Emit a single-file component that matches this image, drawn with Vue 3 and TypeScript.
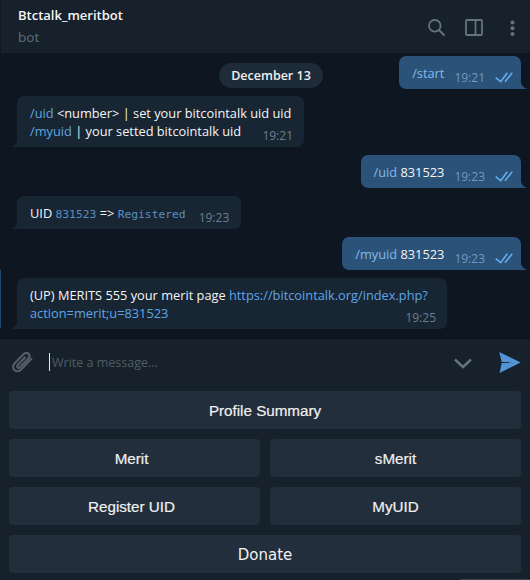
<script setup lang="ts">
type Part = { text: string; kind?: 'cmd' | 'code' | 'link' }
type Msg = { id: number; out: boolean; lines: Part[][]; time: string; gap: number; width?: number }

const messages: Msg[] = [
  { id: 1, out: true, lines: [[{ text: '/start', kind: 'cmd' }]], time: '19:21', gap: 7 },
  {
    id: 2,
    out: false,
    lines: [
      [{ text: '/uid', kind: 'cmd' }, { text: ' <number> | set your bitcointalk uid uid' }],
      [{ text: '/myuid', kind: 'cmd' }, { text: ' | your setted bitcointalk uid' }],
    ],
    time: '19:21',
    gap: 8,
    width: 287,
  },
  { id: 3, out: true, lines: [[{ text: '/uid', kind: 'cmd' }, { text: ' 831523' }]], time: '19:23', gap: 8 },
  {
    id: 4,
    out: false,
    lines: [[{ text: 'UID ' }, { text: '831523', kind: 'code' }, { text: ' => ' }, { text: 'Registered', kind: 'code' }]],
    time: '19:23',
    gap: 8,
  },
  { id: 5, out: true, lines: [[{ text: '/myuid', kind: 'cmd' }, { text: ' 831523' }]], time: '19:23', gap: 8 },
  {
    id: 6,
    out: false,
    lines: [
      [{ text: '(UP) MERITS 555 your merit page ' }, { text: 'https://bitcointalk.org/index.php?', kind: 'link' }],
      [{ text: 'action=merit;u=831523', kind: 'link' }],
    ],
    time: '19:25',
    gap: 8,
    width: 430,
  },
]

const keyboard = [['Profile Summary'], ['Merit', 'sMerit'], ['Register UID', 'MyUID'], ['Donate']]
</script>

<template>
  <div class="app">
    <header class="topbar">
      <div class="peer">
        <div class="peer-name">Btctalk_meritbot</div>
        <div class="peer-status">bot</div>
      </div>
      <div class="actions">
        <svg class="ic-search" width="17" height="17" viewBox="0 0 17 17" fill="none" stroke="#66737f" stroke-width="1.800">
          <circle cx="6.800" cy="6.800" r="5.800" />
          <path d="M11 11l5 5" stroke-linecap="round" />
        </svg>
        <svg class="ic-panel" width="18" height="17" viewBox="0 0 18 17" fill="none" stroke="#66737f" stroke-width="1.800">
          <rect x="1" y="1" width="16" height="15" rx="1" />
          <path d="M10.500 1v15" />
        </svg>
        <svg class="ic-more" width="5" height="16" viewBox="0 0 5 16" fill="#66737f">
          <circle cx="2.500" cy="2.500" r="2" />
          <circle cx="2.500" cy="8.200" r="2" />
          <circle cx="2.500" cy="14" r="2" />
        </svg>
      </div>
    </header>

    <main class="history">
      <div class="edge"></div>
      <div class="date-pill">December 13</div>
      <div
        v-for="m in messages"
        :key="m.id"
        class="row"
        :class="{ out: m.out }"
        :style="{ marginBottom: m.gap + 'px' }"
      >
        <div
          class="bubble"
          :class="{ multi: m.lines.length > 1 }"
          :style="m.width ? { width: m.width + 'px' } : undefined"
        >
          <div class="body">
            <div v-for="(line, i) in m.lines" :key="i" class="line">
              <template v-for="(p, j) in line" :key="j">
                <span :class="p.kind">{{ p.text }}</span>
              </template>
            </div>
          </div>
          <span class="meta">
            <span class="time">{{ m.time }}</span>
            <svg v-if="m.out" class="checks" width="18" height="11" viewBox="0 0 18 11" fill="none" stroke="#66aeee" stroke-width="1.600">
              <path d="M.7 5.700l5 4L12.300.7" />
              <path d="M10 9.700L17.300.7" />
            </svg>
          </span>
          <svg class="tail" width="7" height="10" viewBox="0 0 7 10">
            <path v-if="m.out" d="M0 0c.5 5 3 8.500 7 10H0z" fill="#2b5278" />
            <path v-else d="M7 0C6.500 5 4 8.500 0 10h7z" fill="#182533" />
          </svg>
        </div>
      </div>
    </main>

    <div class="composer">
      <svg class="clip" width="25" height="25" viewBox="0 0 24 24" fill="none" stroke="#525d69" stroke-width="2.100" stroke-linecap="round">
        <path d="M20.500 8.500l-9.800 10.300c-2 2-4.800 2-6.500.4s-1.700-4.400.3-6.400l8.700-9c1.400-1.400 3.400-1.400 4.600-.2s1.200 3.100-.2 4.500l-8 8.400c-.7.700-1.700.7-2.300.2s-.6-1.500.1-2.200l7-7.300" />
      </svg>
      <div class="field"><span class="caret"></span><span class="placeholder">Write a message...</span></div>
      <svg class="chev" width="18" height="11" viewBox="0 0 18 11" fill="none" stroke="#66737f" stroke-width="2.400">
        <path d="M1 1.500L9 9l8-7.500" />
      </svg>
      <svg class="send" width="22" height="21" viewBox="0 0 22 21">
        <path d="M.3 0l21.400 10.500L.6 21l2.100-9.900L14 10.500 2.700 9.900z" fill="#5294d6" />
      </svg>
    </div>

    <section class="keyboard">
      <div v-for="(row, i) in keyboard" :key="i" class="kb-row">
        <button v-for="label in row" :key="label" class="kb-btn" :class="{ donate: label === 'Donate' }">{{ label }}</button>
      </div>
    </section>
    <div class="corner"></div>
  </div>
</template>

<style scoped>
.app {
  position: relative;
  width: 530px;
  height: 580px;
  overflow: hidden;
  display: flex;
  flex-direction: column;
  background: #17212b;
  font-family: "Open Sans", sans-serif;
  color: #f5f5f5;
}

.topbar {
  height: 53px;
  flex: none;
  box-sizing: border-box;
  padding: 2px 15px 0 17px;
  display: flex;
  justify-content: space-between;
  align-items: center;
  border-left: 1px solid #10171f;
}
.peer-name {
  font-size: 13px;
  font-weight: 600;
  line-height: 18px;
  margin-top: -4px;
}
.peer-status {
  font-size: 13.500px;
  line-height: 18px;
  margin-top: 4px;
  color: #5c6f82;
}
.actions {
  display: flex;
  align-items: center;
}
.ic-panel {
  margin-left: 20px;
}
.ic-more {
  margin-left: 27px;
}

.history {
  position: relative;
  flex: none;
  height: 285px;
  box-sizing: border-box;
  padding-top: 3px;
  overflow: hidden;
  background: #0e1621;
}
.edge {
  position: absolute;
  left: 0;
  bottom: 10px;
  width: 1px;
  height: 58px;
  background: #1d4870;
}
.date-pill {
  position: absolute;
  top: 10px;
  left: 219px;
  width: 104px;
  height: 25px;
  border-radius: 13px;
  background: #1e2c3a;
  font-size: 12.500px;
  font-weight: 600;
  line-height: 25px;
  text-align: center;
  color: #f0f0f0;
}
.row {
  display: flex;
  padding: 0 9px 0 17px;
}
.row.out {
  justify-content: flex-end;
}
.bubble {
  position: relative;
  box-sizing: border-box;
  display: flex;
  padding: 8px 11.500px 7px 13px;
  border-radius: 7px 7px 7px 0;
  background: #182533;
  font-size: 12.800px;
  line-height: 18px;
}
.out .bubble {
  background: #2b5278;
  border-radius: 7px 7px 0 7px;
  padding-right: 8px;
}
.line {
  height: 18px;
  white-space: pre;
}
.cmd {
  color: #5fa5e0;
}
.out .cmd {
  color: #82b9ec;
}
.link {
  color: #5fa5e6;
}
.code {
  font-family: "DejaVu Sans Mono", monospace;
  font-size: 11.300px;
  color: #5a8fc0;
}
.meta {
  position: relative;
  top: 4px;
  display: flex;
  align-items: flex-end;
  margin-left: 13px;
  height: 18px;
}
.out .meta {
  margin-left: 10px;
}
.multi .meta {
  position: absolute;
  top: auto;
  right: 11px;
  bottom: 3px;
  margin: 0;
}
.time {
  font-size: 12px;
  line-height: 16px;
  color: #6d7f8f;
}
.out .time {
  color: #7299bf;
}
.checks {
  margin: 0 0 3px 10px;
}
.tail {
  position: absolute;
  bottom: 0;
  left: -6px;
}
.out .tail {
  left: auto;
  right: -6px;
}

.composer {
  flex: none;
  height: 52px;
  box-sizing: border-box;
  border-top: 1px solid #0b1119;
  display: flex;
  align-items: center;
  padding: 0 9px 5px 10px;
}
.field {
  flex: 1;
  display: flex;
  align-items: center;
  margin-left: 14px;
  height: 18px;
}
.caret {
  width: 1px;
  height: 18px;
  background: #e8e8e8;
}
.placeholder {
  margin-left: 2px;
  font-size: 12.500px;
  color: #515b66;
}
.chev {
  position: relative;
  top: 1px;
}
.send {
  margin-left: 27px;
}

.keyboard {
  flex: 1;
  display: flex;
  flex-direction: column;
  gap: 10px;
  padding: 1px 9px 0;
}
.kb-row {
  display: flex;
  gap: 10px;
}
.kb-btn {
  flex: 1 1 0;
  height: 38px;
  padding: 1px 0 0;
  border: 0;
  border-radius: 4px;
  background: #232e3c;
  font-family: "Liberation Sans", Arial, sans-serif;
  font-size: 15.200px;
  -webkit-text-stroke: 0.2px #f0f0f0;
  color: #f0f0f0;
}
.kb-btn:first-child:not(:last-child) {
  text-indent: -6px;
}
.kb-btn.donate {
  font-family: "DejaVu Sans", sans-serif;
  font-size: 15px;
  -webkit-text-stroke: 0;
}
.corner {
  position: absolute;
  right: 0;
  bottom: 0;
  width: 70px;
  height: 1px;
  background: #3c444d;
}
</style>
